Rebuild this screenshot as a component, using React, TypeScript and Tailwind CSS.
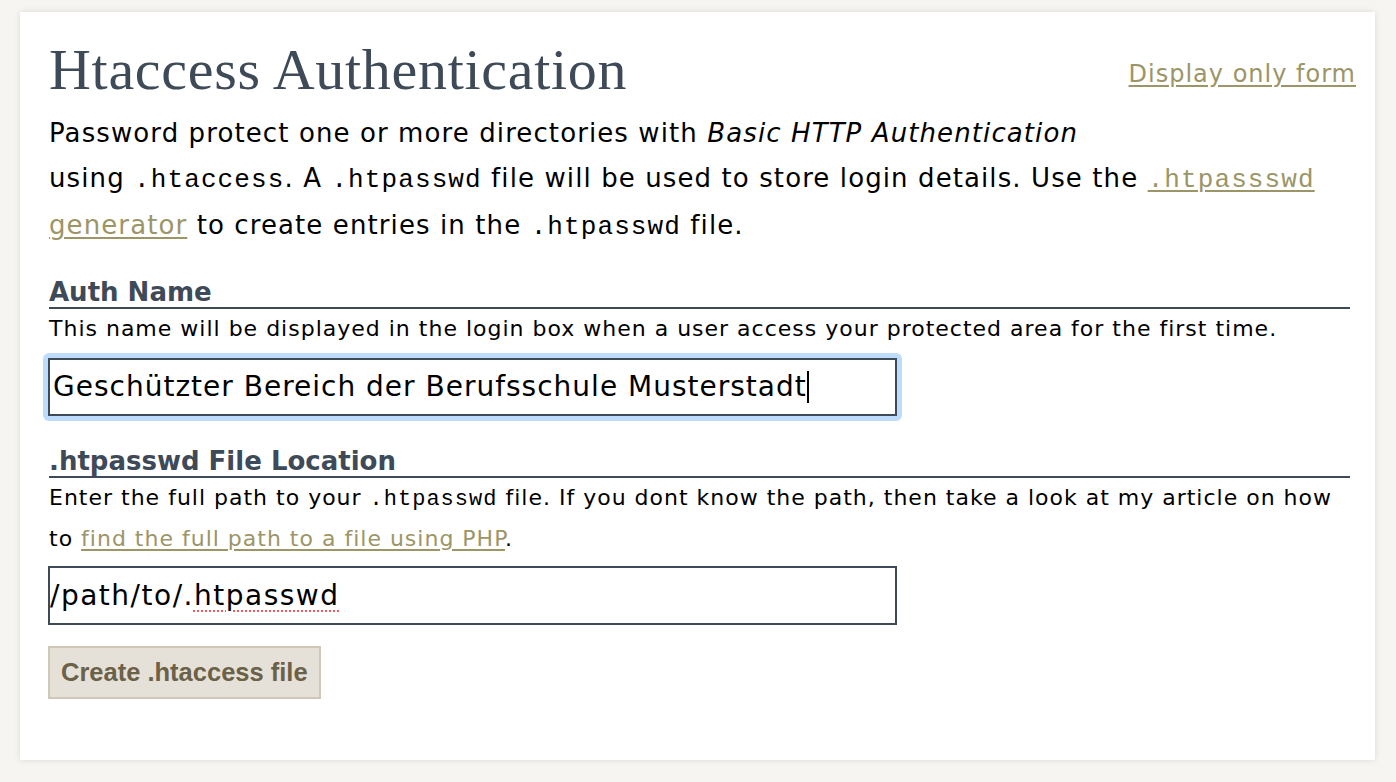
import React from "react";

const sans = "font-['DejaVu_Sans',_'Verdana',_sans-serif]";
const mono = "font-['Liberation_Mono',_monospace]";

export default function App() {
  return (
    <div className="min-h-screen bg-[#f6f5f1] pt-3 pl-5 pr-[21px] pb-5">
      <div className="h-[748px] bg-white shadow-[0_0_6px_rgba(0,0,0,0.12)] pl-[29px] pr-[19px] pt-[28px]">
        <div className="flex items-start justify-between">
          <h1 className="font-['Liberation_Serif',_'Georgia',_serif] text-[58px] leading-[60px] tracking-[0.7px] text-[#3e4a57]">
            Htaccess Authentication
          </h1>
          <a href="#" className={`${sans} mt-[19px] text-[24px] leading-[30px] tracking-[1px] text-[#9c9566] underline underline-offset-[3px]`}>
            Display only form
          </a>
        </div>
        <p className={`${sans} mt-[11px] text-[26px] leading-[45px] tracking-[1.1px] text-black`}>
          Password protect one or more directories with <em>Basic HTTP Authentication</em>
          <br />
          using <code className={mono}>.htaccess</code>. A <code className={mono}>.htpasswd</code> file will be used to store
          login details. Use the{" "}
          <a href="#" className="text-[#9c9566] underline underline-offset-[3px]">
            <code className={mono}>.htpassswd</code>
            <br />
            generator
          </a>{" "}
          to create entries in the <code className={mono}>.htpasswd</code> file.
        </p>

        <div className="mt-[27px] mr-[6px]">
          <h2 className={`${sans} font-bold text-[26px] leading-[30px] text-[#3e4a57] border-b-2 border-[#3e4a57]`}>
            Auth Name
          </h2>
          <p className={`${sans} text-[22px] leading-[40px] tracking-[1px] text-black whitespace-nowrap`}>
            This name will be displayed in the login box when a user access your protected area for the first time.
          </p>
          <div className="mt-[4px] w-[859px] rounded-[6px] bg-[#bddcfb] p-[5px] -ml-[6px]">
            <div className="h-[58px] w-[849px] border-2 border-[#3e4a57] bg-white flex items-center pl-[3px]">
              <span className={`${sans} text-[28px] tracking-[1px] text-black whitespace-nowrap`}>
                Geschützter Bereich der Berufsschule Musterstadt
              </span>
              <span className="w-[2px] h-[32px] bg-black" />
            </div>
          </div>
        </div>

        <div className="mt-[25px] mr-[6px]">
          <h2 className={`${sans} font-bold text-[26px] leading-[30px] text-[#3e4a57] border-b-2 border-[#3e4a57]`}>
            .htpasswd File Location
          </h2>
          <p className={`${sans} text-[22px] leading-[39px] tracking-[1px] text-black whitespace-nowrap`}>
            Enter the full path to your <code className={mono}>.htpasswd</code> file. If you dont know the path, then take a
            look at my article on how
            <br />
            to{" "}
            <a href="#" className="text-[#9c9566] underline underline-offset-[3px]">
              find the full path to a file using PHP
            </a>
            .
          </p>
          <div className="mt-[8px] -ml-[1px] h-[59px] w-[849px] border-2 border-[#3e4a57] bg-white flex items-center">
            <span className={`${sans} text-[28px] tracking-[1.5px] text-black whitespace-nowrap`}>
              /path/to/.
              <span className="underline decoration-dotted decoration-[#f05a5a] decoration-2 underline-offset-[6px]">htpasswd</span>
            </span>
          </div>
          <button className="mt-[21px] -ml-[1px] h-[53px] px-[11px] bg-[#e6e1d8] border-2 border-[#cfc8b8] font-['Liberation_Sans',_Arial,_sans-serif] font-bold text-[25.5px] text-[#6b6048]">
            Create .htaccess file
          </button>
        </div>
      </div>
    </div>
  );
}
